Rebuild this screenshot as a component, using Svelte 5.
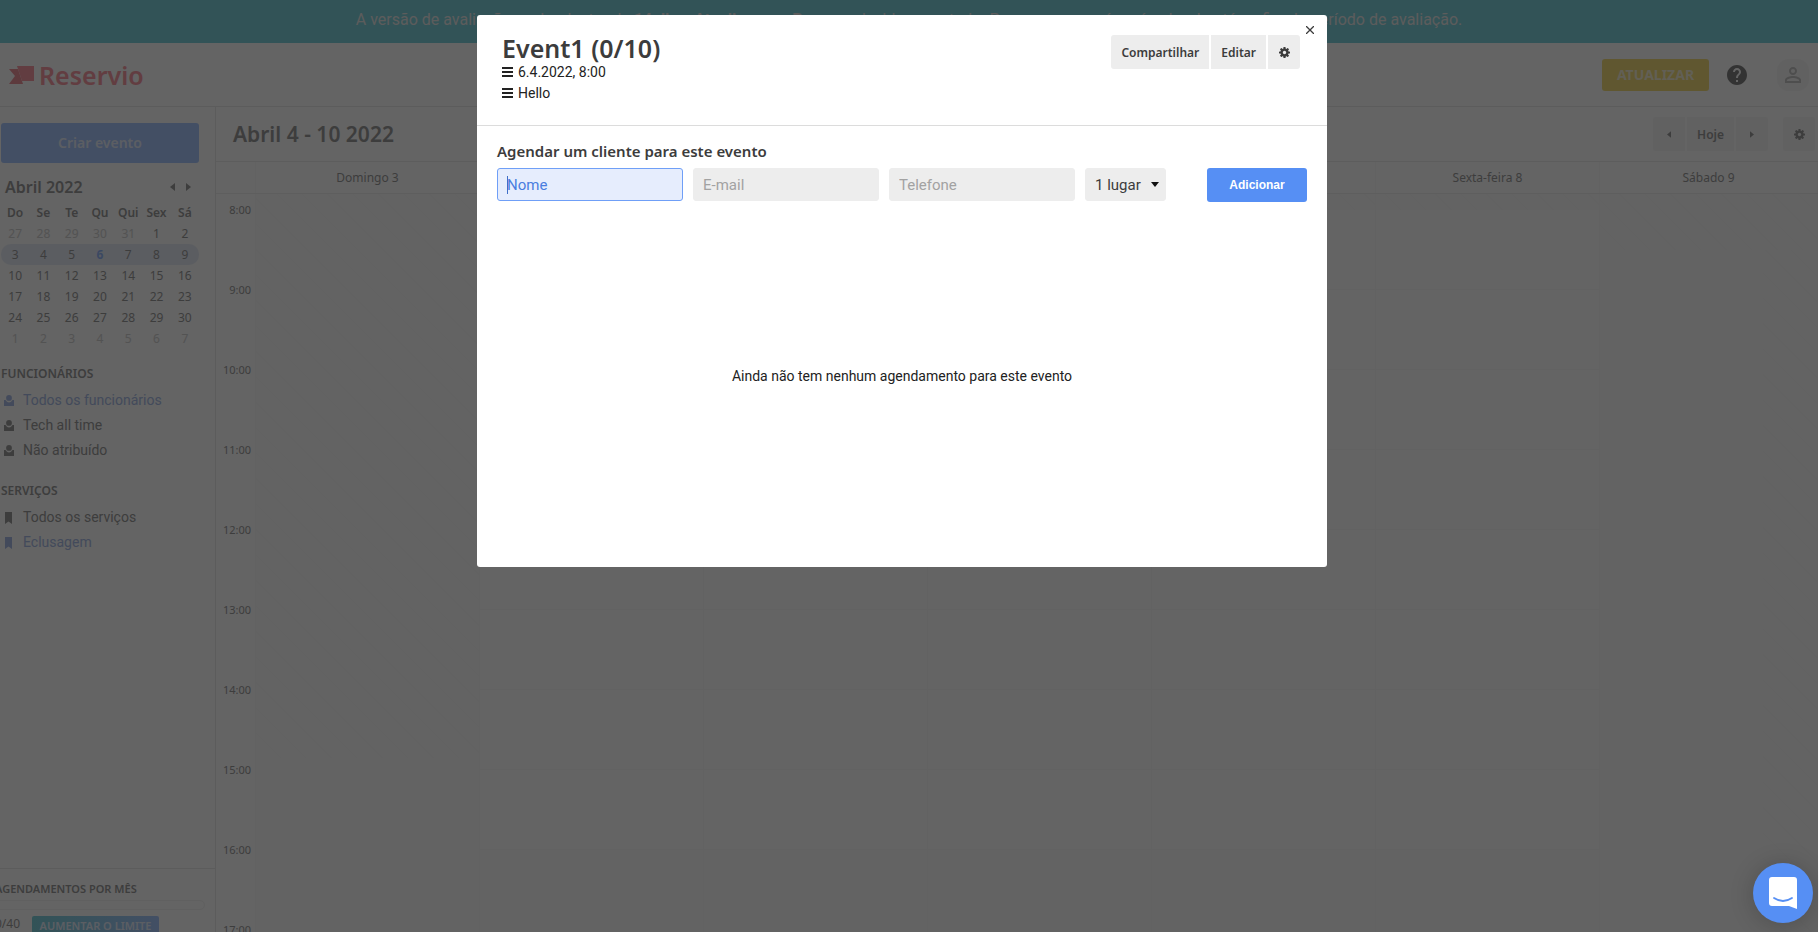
<script>
  const weekdays = ['Do', 'Se', 'Te', 'Qu', 'Qui', 'Sex', 'Sá'];
  const weeks = [
    [27, 28, 29, 30, 31, 1, 2],
    [3, 4, 5, 6, 7, 8, 9],
    [10, 11, 12, 13, 14, 15, 16],
    [17, 18, 19, 20, 21, 22, 23],
    [24, 25, 26, 27, 28, 29, 30],
    [1, 2, 3, 4, 5, 6, 7]
  ];
  const outside = (w, d) => (w === 0 && d > 20) || w === 5;
  const days = ['Domingo 3', 'Segunda-feira 4', 'Terça-feira 5', 'Quarta-feira 6', 'Quinta-feira 7', 'Sexta-feira 8', 'Sábado 9'];
  const hours = [8, 9, 10, 11, 12, 13, 14, 15, 16, 17];
  const staff = [
    { name: 'Todos os funcionários', active: true },
    { name: 'Tech all time', active: false },
    { name: 'Não atribuído', active: false }
  ];
  const services = [
    { name: 'Todos os serviços', active: false },
    { name: 'Eclusagem', active: true }
  ];
</script>

{#snippet gear()}
  <svg class="gear" viewBox="0 0 20 20" aria-hidden="true">
    <g fill="currentColor">
      {#each [0, 45, 90, 135] as a}
        <rect x="8" y="0" width="4" height="20" rx="1" transform={`rotate(${a} 10 10)`} />
      {/each}
    </g>
    <circle cx="10" cy="10" r="5.2" fill="none" stroke="currentColor" stroke-width="4.6" />
    <circle cx="10" cy="10" r="3" class="hole" />
  </svg>
{/snippet}

{#snippet arrow(left)}
  <svg class="arrow" viewBox="0 0 5 8" aria-hidden="true">
    <path d={left ? 'M5 0v8L0 4z' : 'M0 0v8l5-4z'} fill="currentColor" />
  </svg>
{/snippet}

{#snippet lines()}
  <svg class="lines" viewBox="0 0 11 10" aria-hidden="true">
    <path d="M0 1h11M0 5h11M0 9h11" stroke="currentColor" stroke-width="2" />
  </svg>
{/snippet}

<div class="page">
  <div class="banner">
    A versão de avaliação acaba dentro de <b>14 dias</b>. <b>Atualize</b> para <b>Pro</b> para desbloquear tudo. Pague agora e só será cobrado até ao fim do período de avaliação.
  </div>

  <header>
    <a class="logo" href="#home">
      <svg viewBox="0 0 25 18" aria-hidden="true">
        <path d="M0 3h9l5 15H0l6-8z" fill="#e9929a" />
        <path d="M8 0h17v15H13z" fill="#f49aa2" />
      </svg>
      Reservio
    </a>
    <div class="account">
      <button class="upgrade">ATUALIZAR</button>
      <button class="bare" aria-label="Ajuda">
        <svg width="20" height="20" viewBox="2 2 20 20"><path fill="#808080" d="M12 2C6.480 2 2 6.480 2 12s4.480 10 10 10 10-4.480 10-10S17.520 2 12 2zm1 17h-2v-2h2v2zm2.070-7.750l-.9.920C13.450 12.900 13 13.500 13 15h-2v-.5c0-1.100.45-2.100 1.170-2.830l1.240-1.260c.37-.36.59-.86.59-1.410 0-1.100-.9-2-2-2s-2 .9-2 2H8c0-2.210 1.790-4 4-4s4 1.790 4 4c0 .88-.36 1.680-.93 2.250z" /></svg>
      </button>
      <button class="bare avatar" aria-label="Perfil">
        <svg width="16" height="16" viewBox="4 4 16 16"><path fill="#c2c2c2" d="M12 5.900a2.100 2.100 0 110 4.200 2.100 2.100 0 010-4.200m0 9c2.970 0 6.100 1.460 6.100 2.100v1.100H5.900V17c0-.64 3.130-2.100 6.100-2.100M12 4C9.790 4 8 5.790 8 8s1.790 4 4 4 4-1.790 4-4-1.790-4-4-4zm0 9c-2.670 0-8 1.340-8 4v3h16v-3c0-2.660-5.330-4-8-4z" /></svg>
      </button>
    </div>
  </header>

  <div class="body">
    <aside>
      <div class="side-top">
        <button class="create">Criar evento</button>
        <div class="month">
          <h2>Abril 2022</h2>
          <button class="bare" aria-label="Mês anterior">{@render arrow(true)}</button>
          <button class="bare" aria-label="Mês seguinte">{@render arrow(false)}</button>
        </div>
        <table>
          <thead>
            <tr>{#each weekdays as d}<th>{d}</th>{/each}</tr>
          </thead>
          <tbody>
            {#each weeks as week, w}
              <tr class:current={w === 1}>
                {#each week as d}
                  <td class:outside={outside(w, d)} class:today={w === 1 && d === 6}>{d}</td>
                {/each}
              </tr>
            {/each}
          </tbody>
        </table>

        <h3>FUNCIONÁRIOS</h3>
        <ul>
          {#each staff as s}
            <li><a href="#staff" class:active={s.active}>
              <svg width="10" height="11" viewBox="0 0 10 11" aria-hidden="true"><circle cx="5" cy="2.900" r="2.900" fill="currentColor" /><path d="M0 5h1.500Q3 7.600 5 7.600T8.500 5H10v6H0z" fill="currentColor" /></svg>
              {s.name}</a></li>
          {/each}
        </ul>
        <h3>SERVIÇOS</h3>
        <ul>
          {#each services as s}
            <li><a href="#service" class:active={s.active}>
              <svg width="10" height="12" viewBox="0 0 10 12" aria-hidden="true"><path d="M1 0h7v12L4.500 9.500 1 12z" fill="currentColor" /></svg>
              {s.name}</a></li>
          {/each}
        </ul>
      </div>

      <div class="usage">
        <h4>AGENDAMENTOS POR MÊS</h4>
        <div class="meter"></div>
        <div class="quota"><span>0/40</span><button>AUMENTAR O LIMITE</button></div>
      </div>
    </aside>

    <main>
      <div class="toolbar">
        <h1>Abril 4 - 10 2022</h1>
        <div class="group">
          <button aria-label="Semana anterior">{@render arrow(true)}</button>
          <button class="word">Hoje</button>
          <button aria-label="Semana seguinte">{@render arrow(false)}</button>
        </div>
        <div class="group"><button aria-label="Configurações">{@render gear()}</button></div>
      </div>
      <div class="week head">
        <div></div>
        {#each days as d}<div>{d}</div>{/each}
      </div>
      <div class="week grid">
        <div class="times">
          {#each hours as h}<div>{h}:00</div>{/each}
        </div>
        {#each days as d, i}
          <div class="day" class:sunday={i === 0} class:saturday={i === 6}>
            <div class="closed early"></div>
            <div class="open"></div>
            <div class="closed late"></div>
          </div>
        {/each}
      </div>
    </main>
  </div>
</div>

<div class="backdrop">
  <div class="dialog" role="dialog" aria-modal="true" aria-labelledby="event-title">
    <button class="close" aria-label="Fechar">
      <svg width="8" height="8" viewBox="0 0 8 8"><path d="M0 0l8 8M8 0L0 8" stroke="#3c3c3c" stroke-width="1.300" /></svg>
    </button>
    <div class="top">
      <div class="summary">
        <h2 id="event-title">Event1 (0/10)</h2>
        <p>{@render lines()}6.4.2022, 8:00</p>
        <p>{@render lines()}Hello</p>
      </div>
      <div class="group">
        <button class="word">Compartilhar</button>
        <button class="word">Editar</button>
        <button aria-label="Opções">{@render gear()}</button>
      </div>
    </div>
    <form onsubmit={(e) => e.preventDefault()}>
      <h3>Agendar um cliente para este evento</h3>
      <div class="fields">
        <div class="first"><input class="focused" type="text" placeholder="Nome" aria-label="Nome" /></div>
        <input type="email" placeholder="E-mail" aria-label="E-mail" />
        <input type="tel" placeholder="Telefone" aria-label="Telefone" />
        <div class="select">
          <select aria-label="Lugares"><option>1 lugar</option></select>
          <svg width="8" height="5" viewBox="0 0 8 5" aria-hidden="true"><path d="M0 0h8L4 5z" fill="#111" /></svg>
        </div>
        <button class="add">Adicionar</button>
      </div>
    </form>
    <p class="empty">Ainda não tem nenhum agendamento para este evento</p>
  </div>
</div>

<button class="chat" aria-label="Abrir chat">
  <svg width="28" height="32" viewBox="0 0 28 32"><path d="M3 0h22a3 3 0 013 3v29l-8-3H3a3 3 0 01-3-3V3a3 3 0 013-3z" fill="#fff" /><path d="M5 21q9 6 18 0" fill="none" stroke="#568ff4" stroke-width="1.800" stroke-linecap="round" /></svg>
</button>

<style>
  :global(body) { margin: 0; overflow: hidden; background: #fff; }
  :global(*) { box-sizing: border-box; }
  h1, h2, h3, h4, p, ul { margin: 0; padding: 0; }
  button { border: 0; padding: 0; font-family: inherit; cursor: pointer; }
  svg { display: block; flex: none; }
  .bare { background: none; color: inherit; }
  .page, .backdrop { font-family: "Noto Sans", sans-serif; color: #9a9a9a; margin-right: 1px; }
  .page { height: 100vh; overflow: hidden; display: flex; flex-direction: column; background: #f9f9f9; }
  .banner { flex: none; height: 43px; line-height: 39px; text-align: center; white-space: nowrap; background: #7dcfd9; color: #e6e6e6; font-family: Roboto, sans-serif; font-size: 16px; }
  header { flex: none; height: 64px; display: flex; align-items: center; justify-content: space-between; padding: 0 9px; border-bottom: 1px solid #e6e6e6; }
  .logo { display: flex; align-items: center; gap: 5px; color: #f49aa2; font-size: 25px; line-height: 32px; font-weight: 600; text-decoration: none; }
  .logo svg { width: 25px; height: 18px; }
  .account { display: flex; align-items: center; gap: 18px; }
  .upgrade { width: 107px; height: 32px; border-radius: 3px; background: #f0da78; color: #f4eed4; font: 700 14px/30px "Noto Sans", sans-serif; }
  .avatar { display: grid; place-items: center; width: 32px; height: 32px; border-radius: 12px; background: #f2f2f2; margin-left: 12px; }
  .body { flex: 1; min-height: 0; display: flex; }
  aside { width: 216px; flex: none; border-right: 1px solid #e6e6e6; display: flex; flex-direction: column; justify-content: space-between; }
  .side-top { padding: 16px 16px 0 1px; }
  .create { width: 100%; height: 40px; border-radius: 3px; background: #a7c5fa; color: #e4ebf8; font-size: 14px; line-height: 38px; font-weight: 600; }
  .month { display: flex; align-items: center; gap: 11px; padding: 0 8px 0 4px; margin: 11px 0 1px; height: 26px; }
  .month h2 { flex: 1; font-size: 16px; line-height: 26px; font-weight: 600; }
  .arrow { width: 5px; height: 8px; }
  table { width: 100%; border-collapse: collapse; table-layout: fixed; font-size: 12px; }
  th, td { height: 21px; padding: 0; line-height: 21px; text-align: center; }
  th { font-weight: 600; height: 22px; }
  .outside { color: #cfcfcf; }
  .current td { background: #e4e9f3; }
  .current td:first-child { border-radius: 10px 0 0 10px; }
  .current td:last-child { border-radius: 0 10px 10px 0; }
  .current .today { color: #95b5f5; font-weight: 700; }
  .side-top h3 { font-size: 12px; font-weight: 600; line-height: 24px; margin-top: 13px; }
  ul { list-style: none; padding: 2px 0 3px 3px; }
  li a { display: flex; align-items: center; gap: 9px; line-height: 25px; font-family: Roboto, sans-serif; font-size: 14px; color: #9a9a9a; text-decoration: none; }
  li .active { color: #a7b9e4; }
  .usage { height: 64px; border-top: 1px solid #e6e6e6; padding: 10px 10px 0 0; margin-left: -5px; overflow: hidden; }
  .usage h4 { font-size: 11px; line-height: 19px; font-weight: 600; }
  .meter { height: 10px; margin-top: 2px; border: 1px solid #f0f0f0; border-radius: 5px; }
  .quota { display: flex; margin-top: 6px; font-size: 12px; line-height: 16px; }
  .quota span { width: 37px; }
  .quota button { width: 127px; height: 24px; border-radius: 2px; background: linear-gradient(90deg, #7dcfd9, #a7c5fa); color: #e4ebf8; font-size: 11px; font-weight: 600; line-height: 16px; padding-bottom: 5px; white-space: nowrap; }
  main { flex: 1; min-width: 0; display: flex; flex-direction: column; }
  .toolbar { flex: none; height: 55px; display: flex; align-items: flex-start; gap: 15px; padding: 10px 3px 0 17px; border-bottom: 1px solid #e8e8e8; }
  .toolbar h1 { flex: 1; font-size: 21px; line-height: 34px; font-weight: 600; }
  .group { display: flex; gap: 2px; color: #3c3c3c; --face: #ededed; }
  .toolbar .group { color: #9a9a9a; --face: #f2f2f2; }
  .group button { display: grid; place-items: center; min-width: 32px; height: 34px; background: var(--face); color: inherit; font-size: 12px; font-weight: 600; }
  .group button:first-child { border-radius: 3px 0 0 3px; }
  .group button:last-child { border-radius: 0 3px 3px 0; }
  .group button:only-child { border-radius: 3px; }
  .group .word { padding: 0 10px; }
  .toolbar .arrow { width: 4px; height: 7px; }
  .gear { width: 11px; height: 11px; }
  .hole { fill: var(--face); }
  .week { display: grid; grid-template-columns: 40px repeat(6, minmax(0, 224fr)) minmax(0, 218fr); }
  .week > div { border-right: 1px solid #f4f4f4; }
  .head { flex: none; height: 32px; border-bottom: 1px solid #ececec; font-size: 12px; line-height: 31px; text-align: center; }
  .grid { flex: none; }
  .times { font-size: 11px; text-align: right; padding: 6px 4px 0 0; }
  .times div { height: 80px; line-height: 20px; }
  .day { display: flex; flex-direction: column; }
  .closed { background: repeating-linear-gradient(45deg, #f8f8f8 0 17px, #f5f5f5 17px 18px); }
  .early { height: 16px; }
  .open { height: 640px; background: repeating-linear-gradient(#f9f9f9 0 79px, #f6f6f6 79px 80px); }
  .late { flex: 1; background: #f7f7f7; }
  .sunday .early { height: 564px; }
  .sunday .open { display: none; }
  .saturday .early { height: 56px; }
  .saturday .open { height: 0; }
  .saturday .late { background: linear-gradient(90deg, #f7f7f7 75%, transparent 75%), repeating-linear-gradient(45deg, #f8f8f8 0 17px, #f5f5f5 17px 18px); }
  .backdrop { position: fixed; inset: 0; background: rgba(0, 0, 0, 0.6); padding-top: 15px; }
  .dialog { position: relative; width: 850px; max-width: 100%; margin: 0 auto; left: -7px; min-height: 552px; border-radius: 3px; background: #fff; color: #222; }
  .close { position: absolute; top: 7px; right: 9px; width: 16px; height: 16px; display: grid; place-items: center; background: none; }
  .top { display: flex; justify-content: space-between; align-items: flex-start; height: 111px; padding: 20px 27px 0 25px; border-bottom: 1px solid #dcdcdc; }
  .summary h2 { font-size: 25px; line-height: 27px; font-weight: 600; color: #3c3c3c; }
  .summary p { display: flex; align-items: center; gap: 5px; font-family: Roboto, sans-serif; font-size: 14px; line-height: 21px; }
  .lines { width: 11px; height: 10px; margin-bottom: 2px; }
  form { padding: 12px 20px 0; }
  form h3 { font-size: 15px; line-height: 26px; font-weight: 600; color: #3c3c3c; }
  .fields { display: flex; gap: 10px; margin-top: 4px; align-items: flex-start; }
  input, select { width: 186px; height: 33px; border: 1px solid #ededed; border-radius: 3px; background: #ededed; padding: 0 9px; font-family: Roboto, sans-serif; font-size: 15px; color: #3c3c3c; outline: 0; }
  input::placeholder { color: #a2a2a2; opacity: 1; }
  .focused { border-color: #6f9ff7; background: #e6edfd; }
  .focused::placeholder { color: #4a7de0; }
  .first { position: relative; }
  .first::before { content: ""; position: absolute; left: 10px; top: 8px; width: 1px; height: 18px; background: #3f6fc8; }
  .select { position: relative; }
  select { appearance: none; width: 81px; }
  .select svg { position: absolute; right: 7px; top: 14px; }
  .add { width: 100px; height: 34px; margin-left: auto; border-radius: 3px; background: #568ff4; color: #fff; font: 700 12px "Liberation Sans", sans-serif; }
  .empty { margin-top: 163px; text-align: center; font-family: Roboto, sans-serif; font-size: 14px; line-height: 22px; }
  .chat { position: fixed; right: 6px; bottom: 9px; width: 60px; height: 60px; border-radius: 50%; display: grid; place-items: center; background: #568ff4; box-shadow: 0 2px 24px rgba(0, 0, 0, 0.2); }
</style>
